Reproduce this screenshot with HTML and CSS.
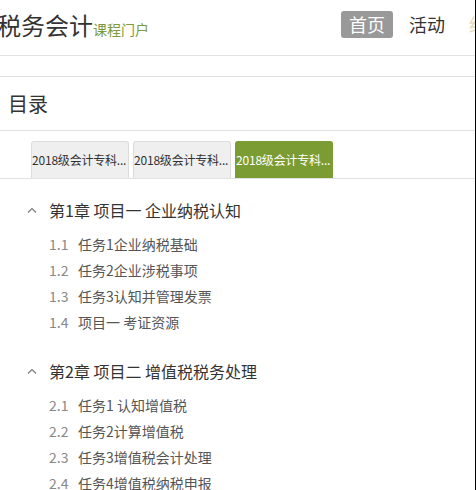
FILE: index.html
```html
<!DOCTYPE html>
<html>

<head>
    <meta charset="utf-8">
    <title>税务会计 课程门户</title>
    <link rel="stylesheet" href="styles.css">
</head>

<body>
    <div class="page">
        <div class="topbar">
            <div class="brand">
                <span class="brand-name">税务会计</span><span class="brand-sub">课程门户</span>
            </div>
            <ul class="nav">
                <li class="current">首页</li>
                <li>活动</li>
                <li class="faint">统计</li>
            </ul>
        </div>
        <div class="band"></div>
        <div class="catalog-title">目录</div>
        <ul class="tabs">
            <li>2018级会计专科...</li>
            <li>2018级会计专科...</li>
            <li class="current">2018级会计专科...</li>
        </ul>
        <div class="chapters">
            <div class="chapter">
                <h3 class="chapter-title">
                    <svg class="caret" width="10" height="6" viewBox="0 0 10 6"><polyline points="1,5.5 5,1.5 9,5.5" fill="none" stroke="#777" stroke-width="1.1"/></svg>
                    <span>第1章 项目一 企业纳税认知</span>
                </h3>
                <ul class="lessons">
                    <li><span class="num">1.1</span>任务1企业纳税基础</li>
                    <li><span class="num">1.2</span>任务2企业涉税事项</li>
                    <li><span class="num">1.3</span>任务3认知并管理发票</li>
                    <li><span class="num">1.4</span>项目一 考证资源</li>
                </ul>
            </div>
            <div class="chapter">
                <h3 class="chapter-title">
                    <svg class="caret" width="10" height="6" viewBox="0 0 10 6"><polyline points="1,5.5 5,1.5 9,5.5" fill="none" stroke="#777" stroke-width="1.1"/></svg>
                    <span>第2章 项目二 增值税税务处理</span>
                </h3>
                <ul class="lessons">
                    <li><span class="num">2.1</span>任务1 认知增值税</li>
                    <li><span class="num">2.2</span>任务2计算增值税</li>
                    <li><span class="num">2.3</span>任务3增值税会计处理</li>
                    <li><span class="num">2.4</span>任务4增值税纳税申报</li>
                </ul>
            </div>
        </div>
    </div>
</body>

</html>
```

FILE: styles.css
```css
* {
    padding: 0;
    margin: 0;
}

ul {
    list-style: none;
}

html,
body {
    width: 100%;
    height: 100%;
    background-color: #fff;
}

body {
    font-family: "Noto Sans CJK SC", "Noto Sans", sans-serif;
    color: #333;
}

.page {
    width: 475px;
    height: 490px;
    border-right: 1px solid #000;
    overflow: hidden;
}

/* 顶部 */
.topbar {
    height: 48px;
    padding-bottom: 7px;
    display: grid;
    grid-template-columns: 341px 1fr;
    align-items: center;
    border-bottom: 1px solid #e2e2e2;
}

.brand {
    margin-left: -3px;
    white-space: nowrap;
}

.brand-name {
    font-size: 24px;
    color: #333;
}

.brand-sub {
    font-size: 14px;
    color: #7b9a3c;
}

.nav {
    display: flex;
    gap: 8px;
    white-space: nowrap;
}

.nav li {
    height: 27px;
    line-height: 27px;
    padding: 0 8px;
    font-size: 18px;
    color: #333;
    border-radius: 3px;
}

.nav li.current {
    background-color: #999;
    color: #fff;
}

.nav li.faint {
    color: #e8dcb8;
}

.band {
    height: 20px;
    border-bottom: 1px solid #e2e2e2;
}

/* 目录 */
.catalog-title {
    height: 53px;
    line-height: 53px;
    padding-left: 8px;
    font-size: 20px;
    color: #333;
    border-bottom: 1px solid #e2e2e2;
}

.tabs {
    display: flex;
    gap: 4px;
    padding: 10px 0 0 31px;
    border-bottom: 1px solid #e2e2e2;
}

.tabs li {
    width: 96px;
    height: 36px;
    line-height: 36px;
    font-size: 12px;
    letter-spacing: -0.2px;
    color: #333;
    background-color: #efefef;
    border: 1px solid #dcdcdc;
    border-bottom: none;
    border-radius: 3px 3px 0 0;
    white-space: nowrap;
    overflow: hidden;
}

.tabs li.current {
    background-color: #7a9c33;
    border-color: #7a9c33;
    color: #fff;
}

/* 章节 */
.chapters {
    padding-top: 18px;
}

.chapter {
    margin-bottom: 23px;
}

.chapter-title {
    display: flex;
    align-items: center;
    height: 26px;
    padding-left: 27px;
    font-size: 16px;
    font-weight: normal;
    color: #333;
    white-space: nowrap;
}

.caret {
    margin-right: 12px;
}

.lessons {
    margin-top: 8px;
    padding-left: 49px;
}

.lessons li {
    height: 26px;
    line-height: 26px;
    font-size: 14px;
    color: #555;
    white-space: nowrap;
}

.lessons .num {
    display: inline-block;
    width: 29px;
    color: #888;
}
```
